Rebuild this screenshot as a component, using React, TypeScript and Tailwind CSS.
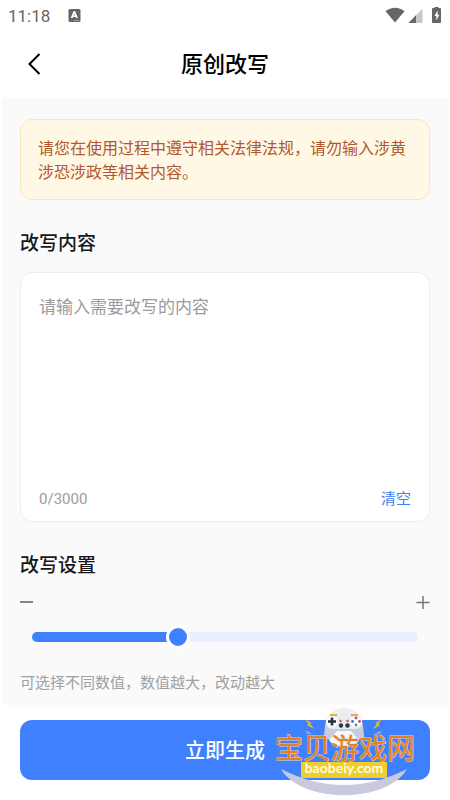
import { useState } from "react";

const SLIDER_THUMB = 24;

function StatusBar() {
  return (
    <div className="flex h-8 items-center justify-between px-2 text-[#666]">
      <div className="flex items-center gap-4">
        <span className="font-[Roboto,sans-serif] text-[17px] leading-5">11:18</span>
        <svg className="ml-0.5" width="13" height="14" viewBox="0 0 13 14" aria-hidden="true">
          <rect width="12" height="13" x="0.5" y="0" rx="1.5" fill="#666" />
          <path d="M3.600 9 6 3.100h.6L9 9M4.500 7.100h3.600" fill="none" stroke="#fff" strokeWidth="1.700" />
          <path d="M6 11.500h5" stroke="#aaa" strokeWidth="0.800" />
        </svg>
      </div>
      <svg width="57" height="18" viewBox="0 0 57 18" aria-hidden="true">
        <path d="M0.500 4.300C6-0.600 14-0.600 19.500 4.300L10 15.500Z" fill="#666" />
        <path d="M37.500 1.500V16H23.500Z" fill="#c8c8c8" />
        <path d="M31 8.200V16H23.500Z" fill="#666" />
        <path d="M49.500 -0.500h4v1.500h1.500a1 1 0 0 1 1 1V15a1 1 0 0 1-1 1h-7a1 1 0 0 1-1-1V2a1 1 0 0 1 1-1h1.500Z" fill="#666" />
        <path d="M52.600 3.500 49.500 9h1.800V13.500l3-5.800h-1.700Z" fill="#fff" />
      </svg>
    </div>
  );
}

function Bolt({ transform }: { transform: string }) {
  return <path transform={transform} d="M0 0 6.500 4 5.500 5.500 9.500 10 2 6.500 3.500 5Z" fill="#e9b23a" />;
}

function Watermark() {
  return (
    <svg
      className="pointer-events-none absolute right-8 bottom-0"
      width="144"
      height="96"
      viewBox="274 704 144 96"
      role="img"
      aria-label="宝贝游戏网 baobeiy.com"
    >
      <path d="M281 769Q344 801 407 769C386 804 302 804 281 769Z" fill="#c9cbdc" />
      <circle cx="344" cy="726" r="18.500" fill="#efeff1" />
      <ellipse cx="344" cy="738" rx="15" ry="9" fill="#f8f8fa" />
      <path d="M329 716Q344 713 359 716Q363 719 364 737Q362 741 357 738L351 731H337L331 738Q326 741 324 737Q325 719 329 716Z" fill="#c9cbd8" />
      <path d="M329 716Q344 713 359 716Q363 719 362 725Q361 729 354 729H334Q327 729 326 725Q325 719 329 716Z" fill="#e9ebf3" />
      <path d="M330 715h7M351 715h7" stroke="#e4ae43" strokeWidth="2" />
      <circle cx="332" cy="721.500" r="5.500" fill="#fff" />
      <circle cx="356" cy="721.500" r="5.500" fill="#fff" />
      <path d="M332 717.500v8M328 721.500h8" stroke="#20313f" strokeWidth="2.600" />
      <circle cx="356" cy="718" r="1.400" fill="#d9415c" />
      <circle cx="356" cy="725" r="1.400" fill="#2f9ca7" />
      <circle cx="352.500" cy="721.500" r="1.400" fill="#3476bd" />
      <circle cx="359.500" cy="721.500" r="1.400" fill="#d9415c" />
      <circle cx="340.500" cy="721" r="1.200" fill="#d9415c" />
      <circle cx="347.500" cy="721" r="1.200" fill="#d9415c" />
      <circle cx="341" cy="725.500" r="2.200" fill="#263746" />
      <circle cx="347.500" cy="725.500" r="2.200" fill="#263746" />
      <Bolt transform="translate(305 719)" />
      <Bolt transform="translate(304 731) rotate(-6) scale(.9 .4)" />
      <Bolt transform="translate(382 719) scale(-1 1)" />
      <Bolt transform="translate(383 731) rotate(6) scale(-.9 .4)" />
      <text
        x="275"
        y="759"
        fontSize="28"
        fontFamily="'Noto Sans CJK SC', sans-serif"
        fill="#e3801f"
        stroke="#ecd0b8"
        strokeWidth="1"
        paintOrder="stroke"
      >
        宝贝游戏网
      </text>
      <rect x="301" y="762" width="86" height="16" fill="#efcd2d" />
      <text
        x="344"
        y="773"
        fontSize="14"
        fontWeight="700"
        textAnchor="middle"
        fontFamily="Lato, sans-serif"
        fill="#fffbe0"
      >
        baobeiy.com
      </text>
    </svg>
  );
}

export default function App() {
  const [text, setText] = useState("");
  const [level, setLevel] = useState(37);
  const ratio = level / 100;
  const fill = `calc(${level}% + ${SLIDER_THUMB * (0.5 - ratio)}px)`;

  return (
    <div className="flex min-h-screen flex-col bg-white font-[Roboto,'Noto_Sans_CJK_SC',sans-serif] text-[#16171c]">
      <StatusBar />
      <header className="grid h-[66px] grid-cols-[1fr_auto_1fr] items-center px-5">
        <button type="button" aria-label="返回" className="flex h-8 w-8 items-center justify-start">
          <svg width="24" height="24" viewBox="0 0 24 24" fill="none" stroke="#000" strokeWidth="2" aria-hidden="true">
            <path d="M19.500 1 9.500 11l10 10" />
          </svg>
        </button>
        <h1 className="text-[22px] leading-8 font-medium text-black">原创改写</h1>
      </header>

      <main className="mx-0.5 flex-1 bg-[#fafafa] px-[18px] pt-[21px] pb-[10px]">
        <p className="rounded-xl border border-[#f5e8bd] bg-[#fff8e5] px-[17px] pt-[17px] pb-[14px] text-[16px] leading-6 text-[#b3582c]">
          请您在使用过程中遵守相关法律法规，请勿输入涉黄涉恐涉政等相关内容。
        </p>

        <h2 className="mt-[30px] text-[19px] leading-7 font-medium">
          <label htmlFor="content">改写内容</label>
        </h2>
        <div className="mt-[14px] flex h-[250px] flex-col rounded-xl border border-[#ebecf7] bg-white px-[18px] pt-5 pb-2">
          <textarea
            id="content"
            maxLength={3000}
            value={text}
            onChange={(e) => setText(e.target.value)}
            placeholder="请输入需要改写的内容"
            className="w-full flex-1 resize-none text-[17px] leading-7 outline-none placeholder:text-[#9b9b9f]"
          />
          <div className="flex h-7 items-center justify-between text-[15px] leading-6">
            <span className="text-[#9b9b9f]">{text.length}/3000</span>
            <button type="button" onClick={() => setText("")} className="text-[#3e7ff0]">
              清空
            </button>
          </div>
        </div>

        <h2 className="mt-[30px] text-[19px] leading-7 font-medium">
          <label htmlFor="level">改写设置</label>
        </h2>
        <div className="mt-[14px] flex h-4 items-center justify-between">
          <button type="button" aria-label="减小" onClick={() => setLevel(Math.max(0, level - 1))}>
            <svg width="13" height="14" viewBox="0 0 13 14" stroke="#858585" strokeWidth="2" aria-hidden="true">
              <path d="M0 7h13" />
            </svg>
          </button>
          <button type="button" aria-label="增大" onClick={() => setLevel(Math.min(100, level + 1))}>
            <svg width="14" height="14" viewBox="0 0 14 14" stroke="#777" strokeWidth="1.500" aria-hidden="true">
              <path d="M0.500 7.500h13M7 1v13" />
            </svg>
          </button>
        </div>
        <div className="relative mx-3 mt-[15px] flex h-6 items-center">
          <div className="h-[10px] w-full overflow-hidden rounded-full bg-[#e8effe]">
            <div className="h-full bg-[#3f80ff]" style={{ width: fill }} />
          </div>
          <input
            id="level"
            type="range"
            min={0}
            max={100}
            value={level}
            onChange={(e) => setLevel(Number(e.target.value))}
            className="absolute inset-0 h-6 w-full appearance-none bg-transparent [&::-webkit-slider-thumb]:h-6 [&::-webkit-slider-thumb]:w-6 [&::-webkit-slider-thumb]:appearance-none [&::-webkit-slider-thumb]:rounded-full [&::-webkit-slider-thumb]:border-3 [&::-webkit-slider-thumb]:border-white [&::-webkit-slider-thumb]:bg-[#3f80ff]"
          />
        </div>
        <p className="mt-[22px] text-[15px] leading-6 text-[#a0a0a3]">可选择不同数值，数值越大，改动越大</p>
      </main>

      <footer className="relative px-5 pt-[15px] pb-5">
        <button type="button" className="h-[60px] w-full rounded-xl bg-[#3f80ff] pt-0.5 text-[20px] leading-7 font-medium text-white">
          立即生成
        </button>
        <Watermark />
      </footer>
    </div>
  );
}
